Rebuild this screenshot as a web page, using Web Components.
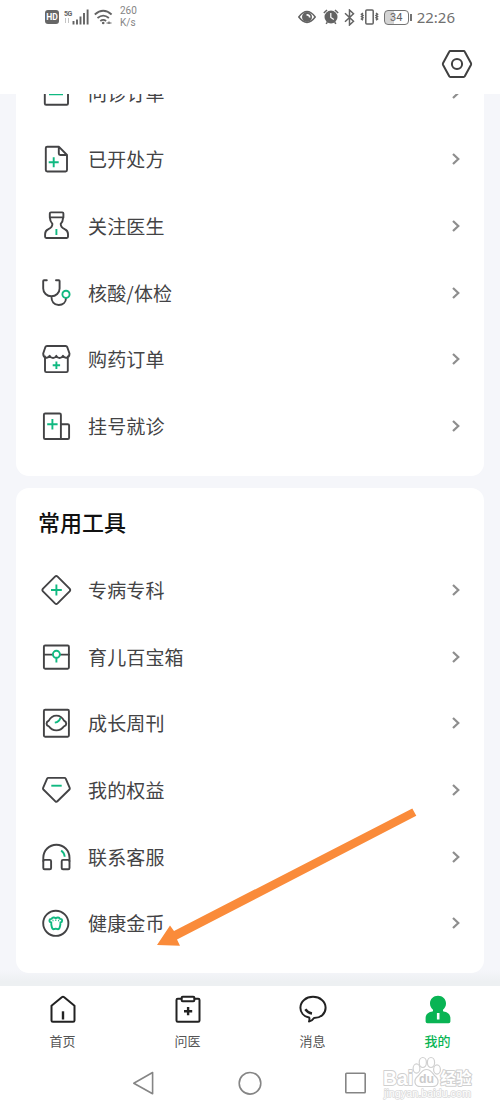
<!DOCTYPE html>
<html lang="zh-CN">
<head>
<meta charset="utf-8">
<meta name="viewport" content="width=device-width, initial-scale=1">
<title>我的</title>
<style>
  :root {
    --ink: #434345;
    --green: #10b981;
    --brand: #09b454;
    --page: #f5f6fa;
    --font: "Noto Sans CJK SC", sans-serif;
  }
  body {
    margin: 0;
    font-family: var(--font);
    color: var(--ink);
    background: #fff;
  }
</style>
</head>
<body>
<mine-page></mine-page>

<script>
// 32x32 line icons; class "g" is the green accent stroke
const icons = {
  inquiry: `<path d="M4.8 5v21.4q0 1.3 1.3 1.3h20.6q1.3 0 1.3-1.3V5"/><path class="g" style="stroke-width:1.300" d="M9 17.600h14"/>`,
  recipe: `<path d="M18.8 3.7H7.2q-1.4 0-1.4 1.4v22q0 1.4 1.4 1.4h18.4q1.4 0 1.4-1.4V12zV10.6q0 1.4 1.4 1.4H27"/><path class="g" d="M8.7 19.3h10M13.7 14.3v10"/>`,
  doctor: `<path d="M9.8 7.4V3.6q0-1.2 1.2-1.2h11.2q1.2 0 1.2 1.2v3.8zc.2 3 1 4.800 2.600 6.500c0 3-1.600 4-4 5.200q-3.300 1.500-3.300 5v2.700q0 1.200 1.200 1.200h20.500q1.200 0 1.200-1.200v-2.700q0-3.500-3.300-5c-2.400-1.200-4-2.200-4-5.200c1.600-1.700 2.300-3.500 2.500-6.500"/><path class="g" d="M16.400 19v6"/>`,
  checkup: `<path d="M6.800 3.300H4q-.8 0-.8.8v7.400a8.200 7.800 0 0 0 16.400 0V4.100q0-.8-.8-.8H16M11.400 19.300c0 5.200 2.600 8.700 7.300 8.700c4.300 0 7.300-2.800 7.300-6.900"/><circle class="g" cx="26" cy="17.300" r="3.600"/>`,
  shop: `<path d="M5 13.500v14.200q0 1.400 1.400 1.400h20q1.400 0 1.400-1.400V13.500M7 3h18.600q1.200 0 1.700 1.200l2.200 6.300c0 5-5 5.200-6.600 2.300c-1.500 3-5.200 3-6.600 0c-1.400 3-5.100 3-6.600 0c-1.600 2.900-6.500 2.700-6.500-2.300l2.100-6.300Q5.800 3 7 3z"/><path class="g" d="M12.700 22.300h7.400M16.400 18.600V26"/>`,
  hospital: `<path d="M20.800 29H5.200Q3.900 29 3.900 27.700V4.800q0-1.300 1.300-1.300h14.400q1.300 0 1.300 1.300V29h6.900q1.300 0 1.300-1.300V15.500q0-1.300-1.300-1.300h-6.900"/><path class="g" d="M7.200 14.200h10.400M12.400 9v10.400"/>`,
  special: `<path d="M15 2.600q1.300-1.200 2.600 0l12 12q1.200 1.400 0 2.800l-12 12q-1.300 1.200-2.600 0l-12-12q-1.200-1.400 0-2.800z"/><path class="g" d="M11 16h10.800M16.400 10.600v10.800"/>`,
  baby: `<path d="M12.600 13.600H4M29 13.600h-8.800"/><rect x="3.900" y="4.500" width="25" height="23.300" rx="1.200"/><circle class="g" cx="16.400" cy="13.300" r="3.500"/><path class="g" d="M16.400 17v4.500"/>`,
  weekly: `<rect x="3.900" y="2.700" width="25" height="27" rx="1.200"/><path d="M8.800 13.700c1.700-3.400 4.400-5.100 7.600-5.100s5.900 1.700 7.600 5.100c3 1.400 3 4.600 0 5.600c-1.900 2.700-4.500 4.100-7.600 4.100s-5.700-1.400-7.600-4.100c-3-1-3-4.200 0-5.600z"/><path class="g" d="M14.800 15.600c3.200-.5 4.900-1.800 5.500-4.600"/>`,
  rights: `<path d="M8.300 3.900h16.200q.8 0 1.200.8l4 9.200q.4.900-.3 1.600L17.400 27.300q-1 1-2 0L3.400 15.500q-.7-.7-.3-1.600l4-9.200q.4-.8 1.200-.8z"/><path class="g" d="M11.300 11.700h10.400"/>`,
  service: `<path d="M3.300 20v-3.200a13.100 13.100 0 0 1 26.200 0V20"/><rect x="3.300" y="18.900" width="7.800" height="9.400" rx="1.300"/><rect x="21.700" y="18.900" width="7.800" height="9.400" rx="1.300"/><path class="g" d="M21.200 9.500q3.200 2.500 3.500 6.300"/>`,
  coin: `<circle cx="15.800" cy="16.300" r="12.600"/><path class="g" d="M11.300 15.500c-2.500-.5-2.500-3.700.3-3.600c.8-1.800 3-1.600 4.200-.7c1.200-.9 3.400-1.100 4.200.7c2.800-.1 2.800 3.100.4 3.600c.3 1.600-.2 2.600-.4 3.600c-.3 1.900-1.100 3.100-2.200 3.100c-1.200-.5-2.800-.5-4 0c-1.100 0-1.900-1.200-2.200-3.100c-.2-1-.6-2-.3-3.600z"/><path class="g" style="stroke-width:1" d="M13 12.800v1.500M15.800 12.500v1.500M18.600 12.800v1.500"/>`,
  home: `<path d="M4.500 12.800L14.800 4.300q1.200-1 2.400 0l10.300 8.500v14.600q0 1.400-1.400 1.400H5.900q-1.400 0-1.400-1.400z"/><path style="stroke-width:2.400;stroke-linecap:butt" d="M16 18.300v8.200"/>`,
  clinic: `<path d="M9.500 5.700H5.800q-1.300 0-1.300 1.300v20.400q0 1.300 1.300 1.300h20.400q1.300 0 1.300-1.300V7q0-1.300-1.300-1.300h-3.700"/><rect x="9.600" y="3.800" width="12.800" height="4.400" rx="1.200"/><path style="stroke-width:2.400;stroke-linecap:butt" d="M12 18.200h8.200M16.100 14.100v8.200"/>`,
  message: `<path d="M16 3.800c7 0 12.600 4.600 12.600 10.900c0 6.200-5 10.200-11.600 10.300c-1.200 1.900-2.900 3.200-5 3.600q.9-2.300.1-4.100C6.500 23.300 3.400 19.300 3.400 14.700C3.400 8.400 9 3.800 16 3.800z"/><path style="stroke-width:2.400;stroke-linecap:butt" d="M8.300 16.300q2.600 3.700 6.700 4.200"/>`,
  mine: `<path style="fill:var(--brand);stroke:none" fill-rule="evenodd" d="M16 2.800c4.600 0 8 3.400 8 7.600c0 2.800-1.300 4.600-3 6.300v1.500c4.500.9 7.400 2.800 7.400 7v3.200q0 1.800-1.800 1.800H5.400q-1.800 0-1.800-1.800v-3.200c0-4.200 2.900-6.100 7.400-7v-1.500c-1.700-1.700-3-3.500-3-6.300c0-4.200 3.400-7.600 8-7.600zM14.900 20v6.400h2.600V20z"/>`,
  settings: `<path d="M9.400 3.100h13.200q.9 0 1.300.8l6 11.100q.5 1 0 2l-6 11.100q-.4.800-1.300.8H9.400q-.9 0-1.300-.8l-6-11.100q-.5-1 0-2l6-11.100q.4-.8 1.300-.8z"/><circle cx="16" cy="16" r="5.100"/>`
};

class LineIcon extends HTMLElement {
  constructor() {
    super();
    this.attachShadow({ mode: "open" });
  }

  connectedCallback() {
    this.shadowRoot.innerHTML = `
      <style>
        :host { display: block; flex: none; width: 32px; height: 32px; }
        svg {
          display: block;
          fill: none;
          stroke: currentColor;
          stroke-width: var(--stroke, 1.9);
          stroke-linecap: round;
          stroke-linejoin: round;
        }
        .g { stroke: var(--green); stroke-linecap: butt; }
      </style>
      <svg width="32" height="32" viewBox="0 0 32 32">${icons[this.getAttribute("name")] || ""}</svg>
    `;
  }
}

class StatusBar extends HTMLElement {
  constructor() {
    super();
    this.attachShadow({ mode: "open" });
    this.shadowRoot.innerHTML = `
      <style>
        :host {
          display: flex;
          align-items: center;
          justify-content: space-between;
          height: 34px;
          padding: 0 45px 0 45px;
          color: #636363;
          font-family: Roboto, sans-serif;
        }
        .side { display: flex; align-items: center; }
        svg { display: block; fill: none; stroke: currentColor; }
        .hd {
          width: 14px;
          height: 14px;
          border-radius: 3px;
          background: #666;
          color: #fff;
          font-size: 8.500px;
          line-height: 14px;
          font-weight: 700;
          text-align: center;
        }
        .net {
          display: flex;
          flex-direction: column;
          align-items: flex-start;
          margin-left: 5px;
          width: 8px;
          height: 15px;
          font-size: 7px;
          line-height: 8px;
          font-weight: 700;
          letter-spacing: -0.5px;
        }
        .net svg { stroke: #c4c4c4; }
        .wifi { margin-left: 5px; }
        .speed {
          margin-left: 7px;
          font-size: 10px;
          line-height: 12.5px;
          color: #858585;
        }
        .battery {
          display: flex;
          align-items: center;
          margin-left: 5px;
        }
        .level {
          box-sizing: border-box;
          width: 25px;
          height: 15px;
          border: 1.5px solid #747474;
          border-radius: 4px;
          font-size: 11px;
          line-height: 13px;
          text-align: center;
          background: linear-gradient(90deg, #d4d4d4 38%, #fff 38%);
        }
        .tip { width: 2px; height: 7px; margin-left: 1px; background: #747474; }
        .time {
          margin-left: 5px;
          font-family: "Noto Sans", sans-serif;
          font-size: 15px;
          line-height: 20px;
          color: #707070;
        }
      </style>
      <div class="side">
        <span class="hd">HD</span>
        <span class="net">5G<svg width="6" height="5"><path d="M1.500 0v5M4.500 0v5"/></svg></span>
        <svg width="17" height="16" stroke-width="1.900"><path d="M1.500 12v3.500M5 10.500v5M8.500 7.500v8M12 4v11.500M15.600.5v15"/></svg>
        <svg class="wifi" width="19" height="16" stroke-width="1.800"><path d="M.8 5.500q8.400-7.500 16.800 0M3.500 9q5.700-4.800 11.400 0M6.300 12q2.900-2.300 5.800 0"/><circle cx="9.200" cy="14" r="1.300" fill="currentColor" stroke="none"/><path stroke-width="1.200" d="M12.500 14h5M15 12.500v2.500"/></svg>
        <span class="speed">260<br>K/s</span>
      </div>
      <div class="side">
        <svg width="18" height="14" stroke-width="1.500"><path d="M.8 7Q9-3.800 17.200 7Q9 17.800.8 7z"/><circle cx="9" cy="7" r="5" fill="currentColor" stroke="none"/><path stroke="#fff" stroke-width="1.700" d="M8.500 5q3-.4 3.200 2.500"/></svg>
        <svg style="margin-left:7px" width="16" height="16"><circle cx="8" cy="8" r="6.500" fill="currentColor" stroke="none"/><path stroke-width="1.500" d="M.8 4L4 1M15.200 4L12 1M3 14.800l1.500-1.500M13 14.800l-1.500-1.500"/><path stroke="#fff" stroke-width="1.200" d="M7.800 4v4.400l3 2"/></svg>
        <svg style="margin-left:5px" width="11" height="17" stroke-width="1.500"><path d="M1 4.300l8.500 8L5.500 16V1l4 3.700-8.500 8"/></svg>
        <svg style="margin-left:5px" width="19" height="16" stroke-width="1.500"><rect x="5.800" y="1" width="7.400" height="14" rx="1"/><path stroke-width="1.500" d="M3 4L1.500 5.200 3 6.400 1.500 7.600 3 8.800 1.500 10 3 11.200M16 4l1.500 1.200L16 6.400l1.500 1.200L16 8.800l1.500 1.200-1.500 1.200"/></svg>
        <span class="battery"><span class="level">34</span><span class="tip"></span></span>
        <span class="time">22:26</span>
      </div>
    `;
  }
}

class MenuCard extends HTMLElement {
  constructor() {
    super();
    this.attachShadow({ mode: "open" });
    this.shadowRoot.innerHTML = `
      <style>
        :host {
          display: block;
          flex: none;
          background: #fff;
          border-radius: 13px;
          padding-bottom: 16.5px;
        }
        ::slotted(h2) {
          margin: 0;
          padding: 15.5px 22px 17.5px;
          font-size: 22px;
          line-height: 36px;
          font-weight: 500;
          color: #111;
        }
      </style>
      <slot name="title"></slot>
      <slot></slot>
    `;
  }
}

class MenuRow extends HTMLElement {
  constructor() {
    super();
    this.attachShadow({ mode: "open" });
  }

  connectedCallback() {
    this.shadowRoot.innerHTML = `
      <style>
        :host {
          display: flex;
          align-items: center;
          gap: 16.5px;
          height: 66.65px;
          padding: 0 23px 0 23.5px;
        }
        .label { flex: 1; font-size: 19px; line-height: 28px; letter-spacing: .15px; }
        .arrow { display: block; fill: none; stroke: #8e8e8e; stroke-width: 2.2; }
      </style>
      <line-icon name="${this.getAttribute("icon")}"></line-icon>
      <span class="label"><slot></slot></span>
      <svg class="arrow" width="10" height="12"><path d="M2 1l5.300 5L2 11"/></svg>
    `;
  }
}

class TabItem extends HTMLElement {
  constructor() {
    super();
    this.attachShadow({ mode: "open" });
  }

  connectedCallback() {
    this.shadowRoot.innerHTML = `
      <style>
        :host {
          --stroke: 2;
          display: flex;
          flex: 1;
          flex-direction: column;
          align-items: center;
          color: #222;
        }
        .label { margin-top: 5.5px; font-size: 13px; line-height: 20px; color: #555; }
        :host([active]) .label { color: var(--brand); font-weight: 500; }
      </style>
      <line-icon name="${this.getAttribute("icon")}"></line-icon>
      <span class="label"><slot></slot></span>
    `;
  }
}

class SystemNav extends HTMLElement {
  constructor() {
    super();
    this.attachShadow({ mode: "open" });
    this.shadowRoot.innerHTML = `
      <style>
        :host { display: flex; justify-content: center; align-items: center; gap: 82px; height: 56px; }
        svg { display: block; fill: none; stroke: #858585; stroke-width: 1.6; stroke-linejoin: round; }
      </style>
      <svg width="24" height="24"><path d="M1.800 12.300L20.600 1.500v21.300z"/></svg>
      <svg width="24" height="24"><circle cx="12" cy="12.300" r="10.800"/></svg>
      <svg width="24" height="24"><rect x="1.800" y="2.300" width="19.400" height="19.400" rx=".8"/></svg>
    `;
  }
}

class BrandMark extends HTMLElement {
  constructor() {
    super();
    this.attachShadow({ mode: "open" });
    this.shadowRoot.innerHTML = `
      <style>
        :host { display: block; }
        svg { display: block; overflow: visible; }
        text { paint-order: stroke; stroke-linejoin: round; }
        .name { fill: #fff; stroke: #d0d0d0; stroke-width: 2; font: 700 21px "Liberation Sans", sans-serif; }
        .cn { fill: #fff; stroke: #d0d0d0; stroke-width: 2; font: 700 15.5px "Noto Sans CJK SC", sans-serif; }
        .du { fill: #cbcbcb; font: 700 12px "Liberation Sans", sans-serif; }
        .url { fill: #fff; stroke: #dadada; stroke-width: 1.4; font: 400 10px "Liberation Sans", sans-serif; }
        .paw { fill: #fff; stroke: #d0d0d0; stroke-width: 1.2; }
      </style>
      <svg width="92" height="44" viewBox="0 0 92 44">
        <g class="paw">
          <path d="M43.500 13.500c-5 0-6 4.500-9 7c-4 3.500-3.500 10 3 10h12c6.500 0 7-6.500 3-10c-3-2.500-4-7-9-7z"/>
          <ellipse cx="33.500" cy="12.500" rx="3.400" ry="4.600"/><ellipse cx="39.800" cy="6.500" rx="3.600" ry="5"/>
          <ellipse cx="48" cy="6.500" rx="3.600" ry="5"/><ellipse cx="54" cy="13.500" rx="3.400" ry="4.600"/>
        </g>
        <text class="name" x="0" y="29" textLength="30" lengthAdjust="spacingAndGlyphs">Bai</text>
        <text class="du" x="36" y="27" textLength="15" lengthAdjust="spacingAndGlyphs">du</text>
        <text class="cn" x="57.500" y="27.500">经验</text>
        <text class="url" x="1" y="40.500" textLength="87" lengthAdjust="spacingAndGlyphs">jingyan.baidu.com</text>
      </svg>
    `;
  }
}

const page = document.createElement("template");
page.innerHTML = `
  <style>
    :host {
      position: relative;
      display: flex;
      flex-direction: column;
      height: 1111px;
      overflow: hidden;
    }
    header {
      --stroke: 2;
      display: flex;
      justify-content: flex-end;
      align-items: center;
      height: 60px;
      padding-right: 27px;
      color: #404040;
    }
    /* content is scrolled to its end, the first card runs under the header */
    main {
      display: flex;
      flex-direction: column;
      justify-content: flex-end;
      gap: 12px;
      height: 892px;
      box-sizing: border-box;
      padding: 0 16px 13px;
      overflow: hidden;
      background: linear-gradient(transparent 876px, #edf0f2 888px), var(--page);
    }
    nav {
      display: flex;
      box-sizing: border-box;
      height: 69px;
      padding-top: 7px;
      background: #fff;
    }
    .pointer { position: absolute; left: 0; top: 790px; pointer-events: none; }
    brand-mark { position: absolute; left: 383px; top: 1056px; }
  </style>
  <status-bar></status-bar>
  <header><line-icon name="settings"></line-icon></header>
  <main>
    <menu-card>
      <menu-row icon="inquiry">问诊订单</menu-row>
      <menu-row icon="recipe">已开处方</menu-row>
      <menu-row icon="doctor">关注医生</menu-row>
      <menu-row icon="checkup">核酸/体检</menu-row>
      <menu-row icon="shop">购药订单</menu-row>
      <menu-row icon="hospital">挂号就诊</menu-row>
    </menu-card>
    <menu-card>
      <h2 slot="title">常用工具</h2>
      <menu-row icon="special">专病专科</menu-row>
      <menu-row icon="baby">育儿百宝箱</menu-row>
      <menu-row icon="weekly">成长周刊</menu-row>
      <menu-row icon="rights">我的权益</menu-row>
      <menu-row icon="service">联系客服</menu-row>
      <menu-row icon="coin">健康金币</menu-row>
    </menu-card>
  </main>
  <nav>
    <tab-item icon="home">首页</tab-item>
    <tab-item icon="clinic">问医</tab-item>
    <tab-item icon="message">消息</tab-item>
    <tab-item icon="mine" active>我的</tab-item>
  </nav>
  <system-nav></system-nav>
  <svg class="pointer" width="440" height="170" viewBox="0 790 440 170">
    <path fill="#fa8b3a" d="M157 945l13-19.500 4 5.500L412.300 808.500l4 7.200L177 939.500l3 6.300z"/>
  </svg>
  <brand-mark></brand-mark>
`;

class MinePage extends HTMLElement {
  constructor() {
    super();
    this.attachShadow({ mode: "open" });
    this.shadowRoot.appendChild(page.content.cloneNode(true));
  }
}

customElements.define("line-icon", LineIcon);
customElements.define("status-bar", StatusBar);
customElements.define("menu-card", MenuCard);
customElements.define("menu-row", MenuRow);
customElements.define("tab-item", TabItem);
customElements.define("system-nav", SystemNav);
customElements.define("brand-mark", BrandMark);
customElements.define("mine-page", MinePage);
</script>
</body>
</html>
